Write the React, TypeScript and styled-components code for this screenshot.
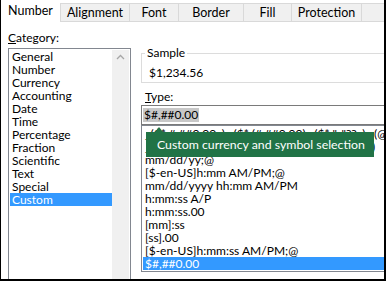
import styled, { createGlobalStyle } from "styled-components";

const GlobalStyle = createGlobalStyle`
  html, body {
    margin: 0;
    padding: 0;
    background: #fff;
  }
  body {
    font-family: Lato, "Open Sans", sans-serif;
  }
`;

const tabs = [
  { label: "Number", width: 59, active: true },
  { label: "Alignment", width: 69 },
  { label: "Font", width: 49 },
  { label: "Border", width: 65 },
  { label: "Fill", width: 48 },
  { label: "Protection", width: 70 },
];

const categories = [
  "General",
  "Number",
  "Currency",
  "Accounting",
  "Date",
  "Time",
  "Percentage",
  "Fraction",
  "Scientific",
  "Text",
  "Special",
  "Custom",
];

const formats = [
  '_($* #,##0.00_);_($* (#,##0.00);_($* "-"??_);_(@_)',
  '_(* #,##0.00_);_(* (#,##0.00);_(* "-"??_);_(@_)',
  "mm/dd/yy;@",
  "[$-en-US]h:mm AM/PM;@",
  "mm/dd/yyyy hh:mm AM/PM",
  "h:mm:ss A/P",
  "h:mm:ss.00",
  "[mm]:ss",
  "[ss].00",
  "[$-en-US]h:mm:ss AM/PM;@",
  "$#,##0.00",
];

export default function App() {
  return (
    <>
      <GlobalStyle />
      <Frame>
        <TabBar>
          {tabs.map((t) => (
            <Tab key={t.label} $active={!!t.active} $width={t.width}>
              {t.label}
            </Tab>
          ))}
          <TabFiller />
        </TabBar>

        <Body>
          <LeftColumn>
            <FieldLabel>
              <u>C</u>ategory:
            </FieldLabel>
            <CategoryBox>
              <CategoryItems>
                {categories.map((c) => (
                  <ListItem key={c} $selected={c === "Custom"}>
                    {c}
                  </ListItem>
                ))}
              </CategoryItems>
              <ScrollTrack>
                <svg width="9" height="6" viewBox="0 0 9 6">
                  <polyline
                    points="1,5 4.5,1.5 8,5"
                    fill="none"
                    stroke="#a6a6a6"
                    strokeWidth="1.3"
                  />
                </svg>
              </ScrollTrack>
            </CategoryBox>
          </LeftColumn>

          <RightColumn>
            <SampleGroup>
              <SampleLegend>Sample</SampleLegend>
              <SampleValue>$1,234.56</SampleValue>
            </SampleGroup>
            <TypeLabel>
              <u>T</u>ype:
            </TypeLabel>
            <TypeInput>
              <Selected>$#,##0.00</Selected>
            </TypeInput>
            <FormatBox>
              {formats.map((f, i) => (
                <ListItem key={f} $selected={i === formats.length - 1}>
                  {f}
                </ListItem>
              ))}
            </FormatBox>
          </RightColumn>
        </Body>

        <Tooltip>Custom currency and symbol selection</Tooltip>
      </Frame>
    </>
  );
}

const Frame = styled.div`
  position: relative;
  width: 386px;
  height: 281px;
  box-sizing: border-box;
  border-left: 1px solid #000;
  border-right: 2px solid #000;
  border-bottom: 2px solid #000;
  overflow: hidden;
  background: #fff;
  color: #000;
  font-size: 12px;
`;

const TabBar = styled.div`
  display: flex;
  align-items: flex-end;
  height: 22px;
  box-sizing: border-box;
  border-bottom: 1px solid #d9d9d9;
`;

const Tab = styled.div<{ $active: boolean; $width: number }>`
  width: ${(p) => p.$width}px;
  flex: none;
  box-sizing: border-box;
  display: flex;
  align-items: center;
  justify-content: center;
  white-space: nowrap;
  font-size: 12.5px;
  height: ${(p) => (p.$active ? "22px" : "18px")};
  margin-bottom: ${(p) => (p.$active ? "-1px" : "0")};
  padding-bottom: ${(p) => (p.$active ? "1px" : "0")};
  background: ${(p) => (p.$active ? "#fff" : "#f0f0f0")};
  border-top: ${(p) => (p.$active ? "none" : "1px solid #d9d9d9")};
  border-left: ${(p) => (p.$active ? "none" : "1px solid #d9d9d9")};
`;

const TabFiller = styled.div`
  flex: 1;
  height: 18px;
  box-sizing: border-box;
  background: #f0f0f0;
  border-top: 1px solid #d9d9d9;
  border-left: 1px solid #d9d9d9;
`;

const Body = styled.div`
  display: grid;
  grid-template-columns: 123px 260px;
  column-gap: 10px;
  padding-left: 7px;
`;

const LeftColumn = styled.div`
  display: flex;
  flex-direction: column;
`;

const FieldLabel = styled.div`
  margin-top: 9px;
  line-height: 14px;
  height: 14px;
  white-space: nowrap;
`;

const CategoryBox = styled.div`
  margin-top: 3px;
  height: 240px;
  box-sizing: border-box;
  border: 1px solid #828790;
  padding: 1px;
  display: flex;
`;

const CategoryItems = styled.div`
  width: 102px;
  flex: none;
`;

const ScrollTrack = styled.div`
  flex: 1;
  background: #f0f0f0;
  display: flex;
  justify-content: center;
  align-items: flex-start;
  padding-top: 4px;
`;

const ListItem = styled.div<{ $selected: boolean }>`
  height: 13px;
  line-height: 13px;
  padding-left: 2px;
  white-space: nowrap;
  background: ${(p) => (p.$selected ? "#3399ff" : "transparent")};
  color: ${(p) => (p.$selected ? "#fff" : "#000")};
`;

const RightColumn = styled.div`
  display: flex;
  flex-direction: column;
  overflow: hidden;
`;

const SampleGroup = styled.fieldset`
  margin: 24px 0 0 0;
  padding: 6px 0 2px 7px;
  border: 1px solid #dcdcdc;
  min-width: 0;
`;

const SampleLegend = styled.legend`
  margin-left: -4px;
  padding: 0 2px;
  line-height: 14px;
`;

const SampleValue = styled.div`
  line-height: 14px;
`;

const TypeLabel = styled.div`
  margin-top: 7px;
  padding-left: 4px;
  line-height: 14px;
`;

const TypeInput = styled.div`
  margin-top: 1px;
  height: 20px;
  box-sizing: border-box;
  border: 1px solid #7a7a7a;
  padding: 1px;
  display: flex;
  align-items: center;
`;

const Selected = styled.span`
  background: #c8c8c8;
  line-height: 14px;
  padding: 0 1px;
`;

const FormatBox = styled.div`
  border: 1px solid #828790;
  padding: 1px;
  box-sizing: border-box;
`;

const Tooltip = styled.div`
  position: absolute;
  left: 145px;
  top: 132px;
  width: 228px;
  height: 25px;
  box-sizing: border-box;
  padding-left: 11px;
  display: flex;
  align-items: center;
  background: #217346;
  color: #fff;
  font-size: 12.3px;
  white-space: nowrap;

  &::before {
    content: "";
    position: absolute;
    left: 9px;
    top: -5px;
    border-left: 4.5px solid transparent;
    border-right: 4.5px solid transparent;
    border-bottom: 5px solid #217346;
  }
`;
